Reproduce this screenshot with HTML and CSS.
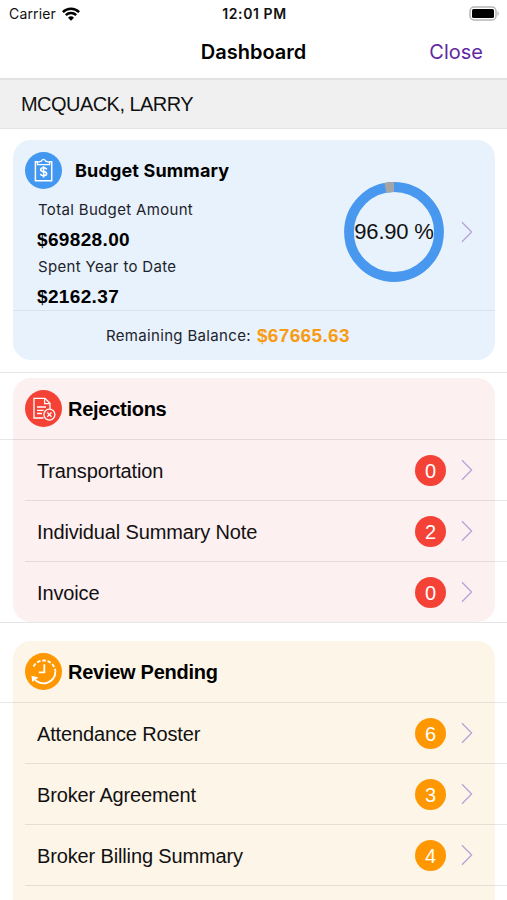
FILE: index.html
```html
<!DOCTYPE html>
<html lang="en">
<head>
    <meta charset="UTF-8">
    <meta name="viewport" content="width=device-width, initial-scale=1.0">
    <title>Dashboard</title>
    <link rel="stylesheet" href="styles.css">
</head>
<body>
    <svg class="defs" width="0" height="0">
        <symbol id="chevron" viewBox="0 0 12 22">
            <path d="M1 1.2 L10.6 11 L1 20.8" fill="none" stroke="currentColor" stroke-width="1.3"/>
        </symbol>
    </svg>

    <div class="status-bar">
        <div class="carrier">
            <span>Carrier</span>
            <svg class="wifi" width="18" height="14" viewBox="0 0 18 14" fill="none" stroke="#000" stroke-width="2.5">
                <path d="M0.9 5.1 A11.6 11.6 0 0 1 17.1 5.1"/>
                <path d="M3.8 8.2 A7.5 7.5 0 0 1 14.2 8.2"/>
                <path d="M9 13.8 L6 10.8 A4.3 4.3 0 0 1 12 10.8 Z" fill="#000" stroke="none"/>
            </svg>
        </div>
        <div class="time">12:01 PM</div>
        <svg class="battery" width="31" height="15" viewBox="0 0 31 15">
            <rect x="1" y="1" width="26" height="13" rx="4" fill="#fff" stroke="#b5b5b5" stroke-width="1.5"/>
            <rect x="3" y="3" width="22" height="9" rx="1.5" fill="#000"/>
            <path d="M28.5 5 A3 3 0 0 1 28.5 10 Z" fill="#b5b5b5"/>
        </svg>
    </div>

    <div class="nav-bar">
        <h1>Dashboard</h1>
        <a class="close">Close</a>
    </div>

    <div class="person">MCQUACK, LARRY</div>

    <div class="section section-budget">
        <div class="card budget">
            <div class="budget-main">
                <div class="budget-info">
                    <div class="budget-head">
                        <svg class="icon" viewBox="0 0 37 37">
                            <circle cx="18.5" cy="18.5" r="18.5" fill="#4297f0"/>
                            <g fill="none" stroke="#fff" stroke-width="1.5">
                                <path d="M13 9.8 H10.4 V28.7 H26.7 V9.8 H24"/>
                                <path d="M12.4 12.6 V10.4 L16.3 9.2 Q18.5 5.6 20.7 9.2 L24.6 10.4 V12.6 Z" stroke-width="1.3"/>
                                <path d="M21.6 17.5 Q21.2 15.8 18.6 15.8 Q15.7 15.8 15.7 17.7 Q15.7 19.3 18.6 19.6 Q21.6 20 21.6 21.8 Q21.6 23.7 18.6 23.7 Q15.9 23.7 15.4 21.9 M18.6 14.2 V25.4" stroke-width="1.6"/>
                            </g>
                        </svg>
                        <h2>Budget Summary</h2>
                    </div>
                    <div class="label label-total">Total Budget Amount</div>
                    <div class="amount">$69828.00</div>
                    <div class="label">Spent Year to Date</div>
                    <div class="amount">$2162.37</div>
                </div>
                <div class="ring">
                    <svg width="100" height="100" viewBox="0 0 100 100" fill="none" stroke-width="9.8">
                        <circle cx="50" cy="50" r="45" stroke="#4898ef"/>
                        <path d="M41.3 5.85 A45 45 0 0 1 50 5" stroke="#a5a5a5"/>
                    </svg>
                    <span>96.90 %</span>
                </div>
                <svg class="chevron"><use href="#chevron"/></svg>
            </div>
            <div class="balance">
                <span class="balance-label">Remaining Balance:</span>
                <span class="balance-value">$67665.63</span>
            </div>
        </div>
    </div>

    <div class="section section-rejections">
        <div class="card rejections">
            <div class="card-head">
                <svg class="icon" viewBox="0 0 37 37">
                    <circle cx="18.5" cy="18.5" r="18.5" fill="#f44336"/>
                    <g fill="none" stroke="#fff" stroke-width="1.3">
                        <path d="M18.5 28 H9 V8.3 H20 L25 13.3 V19"/>
                        <path d="M19.6 8.5 V13.6 H24.8"/>
                        <path d="M12 17 H21 M12 20.3 H18.6 M12 23.5 H17"/>
                        <circle cx="24.4" cy="24.6" r="5.5"/>
                        <path d="M22.3 22.5 L26.5 26.7 M26.5 22.5 L22.3 26.7"/>
                    </g>
                </svg>
                <h2>Rejections</h2>
            </div>
            <ul class="rows">
                <li><span class="name">Transportation</span><span class="badge">0</span><svg class="chevron"><use href="#chevron"/></svg></li>
                <li><span class="name">Individual Summary Note</span><span class="badge">2</span><svg class="chevron"><use href="#chevron"/></svg></li>
                <li><span class="name">Invoice</span><span class="badge">0</span><svg class="chevron"><use href="#chevron"/></svg></li>
            </ul>
        </div>
    </div>

    <div class="section section-pending">
        <div class="card pending">
            <div class="card-head">
                <svg class="icon" viewBox="0 0 37 37">
                    <circle cx="18.5" cy="18.5" r="18.5" fill="#ff9800"/>
                    <g fill="none" stroke="#fff" stroke-width="1.8">
                        <path d="M8.5 13.5 A11.7 11.7 0 0 1 30.4 18.5" stroke-dasharray="3.6 1.8"/>
                        <path d="M30.4 18.5 A11.8 11.8 0 0 1 8.7 25"/>
                        <path d="M19.3 11.2 V19.3 H13.8"/>
                    </g>
                    <path d="M6.5 22.8 L13.4 24.6 L7.2 29 Z" fill="#fff"/>
                </svg>
                <h2>Review Pending</h2>
            </div>
            <ul class="rows">
                <li><span class="name">Attendance Roster</span><span class="badge">6</span><svg class="chevron"><use href="#chevron"/></svg></li>
                <li><span class="name">Broker Agreement</span><span class="badge">3</span><svg class="chevron"><use href="#chevron"/></svg></li>
                <li><span class="name">Broker Billing Summary</span><span class="badge">4</span><svg class="chevron"><use href="#chevron"/></svg></li>
            </ul>
        </div>
    </div>
</body>
</html>
```

FILE: styles.css
```css
* {
    margin: 0;
    padding: 0;
    box-sizing: border-box;
}

body {
    height: 900px;
    overflow: hidden;
    background: #fff;
    color: #111;
    font-family: "Liberation Sans", Arial, sans-serif;
}

svg {
    display: block;
    flex-shrink: 0;
}

.defs {
    display: none;
}

.status-bar {
    display: grid;
    grid-template-columns: 1fr auto 1fr;
    align-items: center;
    height: 27px;
    padding: 0 7px 0 9px;
    font-family: Inter, sans-serif;
    font-size: 14px;
}

.carrier {
    display: flex;
    align-items: center;
    gap: 6px;
    letter-spacing: 0.15px;
}

.time {
    font-weight: 600;
    letter-spacing: 0.6px;
}

.battery {
    justify-self: end;
}

.nav-bar {
    display: grid;
    grid-template-columns: 1fr auto 1fr;
    align-items: center;
    height: 53px;
    padding: 0 24px 1px;
    border-bottom: 2px solid #e2e2e2;
    font-family: Inter, sans-serif;
}

.nav-bar h1 {
    grid-column: 2;
    color: #000;
    font-size: 20px;
    font-weight: 600;
}

.close {
    justify-self: end;
    color: #6229a0;
    font-size: 20px;
}

.person {
    height: 49px;
    padding-left: 21px;
    background: #f0f0f0;
    border-bottom: 1px solid #e4e4e4;
    font-size: 20px;
    letter-spacing: -0.55px;
    line-height: 49px;
}

.section {
    padding: 0 12px 0 13px;
}

.section-budget {
    padding-top: 11px;
    padding-bottom: 12px;
    border-bottom: 1px solid #e5e5e8;
}

.section-rejections {
    padding-top: 5px;
    border-bottom: 1px solid #e5e5e8;
}

.section-pending {
    padding-top: 18px;
}

.card {
    border-radius: 18px;
}

.budget {
    height: 220px;
    background: #e8f2fc;
}

.rejections {
    background: #fdf0f1;
}

.pending {
    height: 280px;
    background: #fdf5e8;
}

.icon {
    width: 37px;
    height: 37px;
}

h2 {
    padding-top: 2px;
    color: #000;
    font-size: 20px;
    font-weight: 700;
    letter-spacing: -0.27px;
}

.budget-main {
    display: flex;
    align-items: center;
    height: 171px;
    padding-right: 22px;
    border-bottom: 1px solid #d8e3ee;
}

.budget-info {
    flex: 1;
    align-self: flex-start;
    padding-top: 12px;
}

.budget-head {
    display: flex;
    align-items: center;
    gap: 13px;
    height: 37px;
    padding-left: 12px;
}

.budget-head h2 {
    padding-top: 0;
    font-family: Inter, sans-serif;
    font-size: 18px;
    letter-spacing: 0.15px;
}

.label {
    height: 26px;
    padding-left: 25px;
    color: #1c232b;
    font-family: Inter, sans-serif;
    font-size: 15px;
    letter-spacing: 0.33px;
    line-height: 26px;
}

.label-total {
    margin-top: 8px;
}

.amount {
    height: 31px;
    padding-left: 24px;
    color: #000;
    font-size: 19px;
    font-weight: 700;
    letter-spacing: 0.35px;
    line-height: 33px;
}

.ring {
    display: grid;
    margin-top: 13px;
    place-items: center;
}

.ring svg,
.ring span {
    grid-area: 1 / 1;
}

.ring span {
    padding-top: 1px;
    font-size: 22px;
    letter-spacing: -0.2px;
    white-space: nowrap;
}

.chevron {
    width: 12px;
    height: 22px;
    margin-left: 15px;
    color: #b9a2d8;
}

.budget .chevron {
    margin-top: 13px;
    margin-left: 17px;
}

.balance {
    display: flex;
    align-items: center;
    height: 49px;
    padding-left: 93px;
    gap: 6px;
}

.balance-label {
    color: #1c232b;
    font-family: Inter, sans-serif;
    font-size: 15px;
    letter-spacing: 0.33px;
}

.balance-value {
    color: #f89b16;
    font-size: 19px;
    font-weight: 700;
    letter-spacing: 0.35px;
}

/* dividers run past the card to the screen edges */
.card-head {
    display: flex;
    align-items: center;
    gap: 6px;
    height: 62px;
    margin: 0 -12px 0 -13px;
    padding-left: 25px;
    border-bottom: 1px solid rgba(60, 60, 80, 0.12);
}

.rows {
    list-style: none;
}

.rows li {
    display: flex;
    align-items: center;
    height: 61px;
    margin: 0 -12px 0 12px;
    padding: 0 34px 0 12px;
    border-bottom: 1px solid rgba(60, 60, 80, 0.12);
}

.rejections .rows li:last-child {
    height: 60px;
    border-bottom: none;
}

.name {
    flex: 1;
    padding-top: 2px;
    font-size: 20px;
    letter-spacing: -0.14px;
}

.badge {
    width: 31px;
    height: 31px;
    border-radius: 50%;
    color: #fff;
    font-size: 20px;
    line-height: 32px;
    text-align: center;
}

.rejections .badge {
    background: #f44336;
}

.pending .badge {
    background: #ff9800;
}
```
